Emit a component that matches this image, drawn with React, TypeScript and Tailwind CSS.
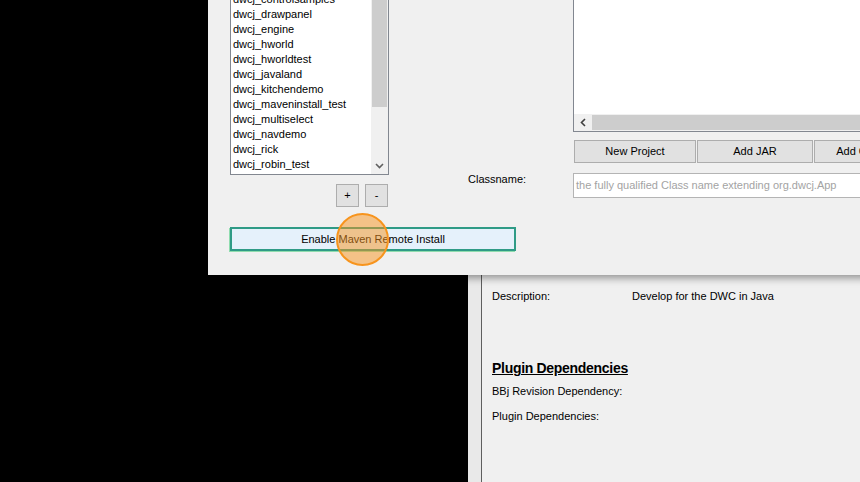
import React from "react";

const items = [
  "dwcj_controlsamples",
  "dwcj_drawpanel",
  "dwcj_engine",
  "dwcj_hworld",
  "dwcj_hworldtest",
  "dwcj_javaland",
  "dwcj_kitchendemo",
  "dwcj_maveninstall_test",
  "dwcj_multiselect",
  "dwcj_navdemo",
  "dwcj_rick",
  "dwcj_robin_test",
];

function WinButton({ label, w }: { label: string; w: string }) {
  return (
    <div
      className={`${w} h-[23px] shrink-0 border border-[#adadad] bg-[#e1e1e1] flex items-center justify-center text-[11px] leading-[13px] text-black whitespace-nowrap`}
    >
      {label}
    </div>
  );
}

export default function App() {
  return (
    <div className="relative w-[860px] h-[482px] overflow-hidden bg-black font-['Liberation_Sans',Arial,sans-serif] text-[11px] text-black">
      {/* Background window */}
      <div className="absolute left-[468px] top-[260px] right-0 bottom-0 flex">
        <div className="w-[13px] bg-[#e9e9e9]" />
        <div className="w-px bg-[#5f5f5f]" />
        <div className="flex-1 bg-[#f0f0f0] pl-[10px] pt-[30px] flex flex-col">
          <div className="flex leading-[13px]">
            <span className="w-[140px]">Description:</span>
            <span>Develop for the DWC in Java</span>
          </div>
          <div className="mt-[57px] text-[14px] leading-[17px] font-bold underline tracking-[-0.3px]">
            Plugin Dependencies
          </div>
          <div className="mt-[8px] leading-[13px]">BBj Revision Dependency:</div>
          <div className="mt-[12px] leading-[13px]">Plugin Dependencies:</div>
        </div>
      </div>

      {/* Foreground dialog */}
      <div className="absolute left-[208px] top-0 w-[700px] h-[275px] bg-[#f0f0f0] shadow-[0_3px_8px_rgba(0,0,0,0.4)] flex flex-col">
        <div className="flex pl-[22px]">
          {/* Left column: project list */}
          <div className="w-[159px] shrink-0 flex flex-col">
            <div className="h-[175px] border border-t-0 border-[#828790] bg-white flex">
              <div className="flex-1 overflow-hidden pl-[2px]">
                <div className="mt-[-8px] flex flex-col">
                  {items.map((it) => (
                    <div key={it} className="h-[15px] leading-[15px] whitespace-nowrap">
                      {it}
                    </div>
                  ))}
                </div>
              </div>
              <div className="w-[17px] shrink-0 bg-[#f0f0f0] flex flex-col">
                <div className="h-[107px] mx-[1px] bg-[#cdcdcd]" />
                <div className="flex-1" />
                <div className="h-[17px] flex items-center justify-center">
                  <svg width="9" height="6" viewBox="0 0 9 6">
                    <polyline points="1,1 4.5,4.5 8,1" fill="none" stroke="#606060" strokeWidth="1.6" />
                  </svg>
                </div>
              </div>
            </div>
            <div className="mt-[9px] flex justify-end gap-[6px] pr-[1px]">
              <div className="w-[23px] h-[23px] border border-[#adadad] bg-[#e1e1e1] flex items-center justify-center text-[11px]">
                +
              </div>
              <div className="w-[23px] h-[23px] border border-[#adadad] bg-[#e1e1e1] flex items-center justify-center text-[11px]">
                -
              </div>
            </div>
          </div>

          {/* Right area */}
          <div className="ml-[79px] flex-1 min-w-0 flex flex-col">
            <div className="pl-[105px]">
              <div className="h-[132px] border border-t-0 border-[#828790] bg-white flex flex-col justify-end">
                <div className="h-[17px] bg-[#f0f0f0] flex">
                  <div className="w-[18px] flex items-center justify-center">
                    <svg width="6" height="9" viewBox="0 0 6 9">
                      <polyline points="5,1 1.5,4.5 5,8" fill="none" stroke="#404040" strokeWidth="1.6" />
                    </svg>
                  </div>
                  <div className="flex-1 my-[1px] bg-[#cdcdcd]" />
                </div>
              </div>
              <div className="mt-[8px] pl-px flex gap-px">
                <WinButton label="New Project" w="w-[122px]" />
                <WinButton label="Add JAR" w="w-[116px]" />
                <WinButton label="Add Classpath" w="w-[116px]" />
              </div>
            </div>
            <div className="mt-[10px] flex">
              <div className="w-[105px] shrink-0 leading-[13px]">Classname:</div>
              <div className="flex-1 h-[25px] border border-[#b4b4b4] bg-white flex items-center pl-[2px]">
                <span className="text-[#a3a3a3] whitespace-nowrap">
                  the fully qualified Class name extending org.dwcj.App
                </span>
              </div>
            </div>
          </div>
        </div>

        <div className="mt-[20px] ml-[22px] w-[286px] h-[24px] border-2 border-[#2f9b86] bg-[#e5f1fb] flex items-center justify-center leading-[13px] shadow-[-1px_1px_0_#8fdcae]">
          Enable Maven Remote Install
        </div>
      </div>

      {/* Click highlight */}
      <div className="absolute left-[336px] top-[213px] w-[53px] h-[53px] rounded-full border-2 border-[#f7941d] bg-[rgba(247,148,29,0.5)]" />
    </div>
  );
}
